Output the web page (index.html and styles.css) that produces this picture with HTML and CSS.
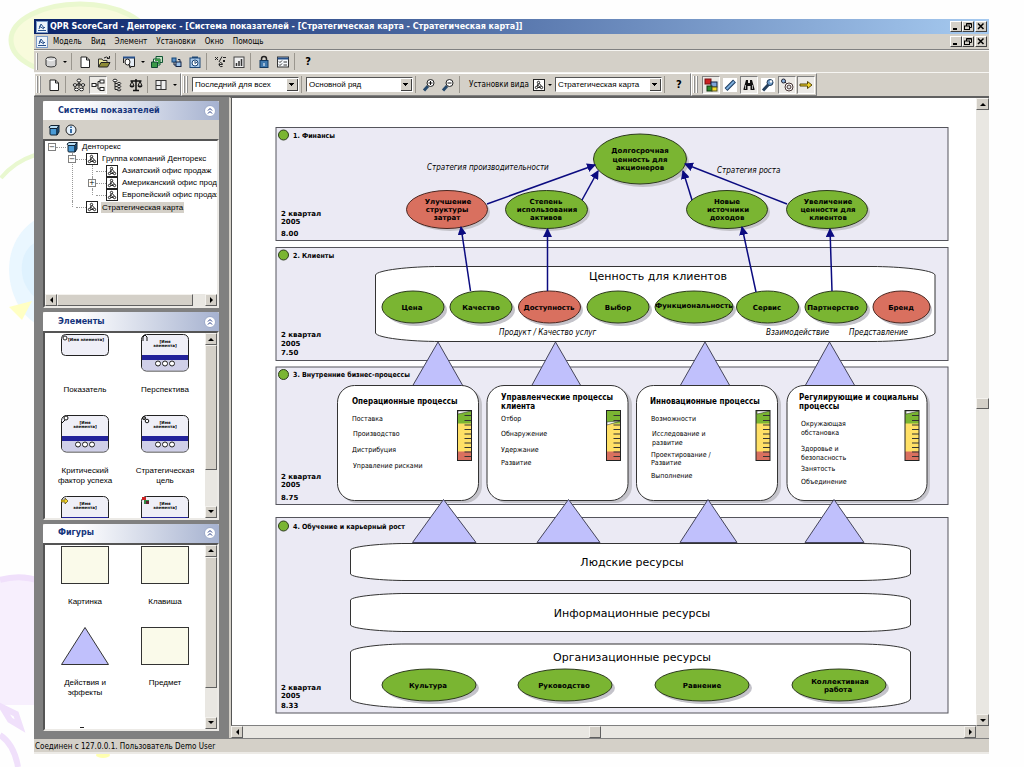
FILE: index.html
```html
<!DOCTYPE html>
<html lang="ru">
<head>
<meta charset="utf-8">
<title>QPR ScoreCard - Денторекс</title>
<link rel="stylesheet" href="styles.css">
</head>
<body>
<svg class="backdrop" width="240" height="767" viewBox="0 0 240 767" aria-hidden="true">
  <ellipse cx="80" cy="40" rx="69" ry="36" fill="#f8fbdc" stroke="#eaf8cf" stroke-width="5"/>
  <path d="M35 155Q14 162 1 178" fill="none" stroke="#e9f8d0" stroke-width="4"/>
  <path d="M40 217C12 232 4 262 12 290Q20 316 40 326z" fill="#eaf7ff"/>
  <path d="M40 240C24 246 18 264 24 282Q30 296 40 300z" fill="#dff2fe"/>
  <path d="M9 307L32 301L22 320z" fill="#ffffc4"/>
  <path d="M0 580Q20 574 40 581V705H0z" fill="#f7effd"/>
  <path d="M0 580Q20 574 40 581M2 707L10 720L20 726L16 714zM0 735Q14 744 18 767" fill="none" stroke="#f0e0fb" stroke-width="6"/>
  <ellipse cx="103" cy="755" rx="7" ry="3" fill="#ffffb0"/>
</svg>
<svg class="defs" width="0" height="0" aria-hidden="true">
  <defs>
    <symbol id="app" viewBox="0 0 12 12"><rect x=".5" y=".5" width="11" height="11" fill="#eef4fb" stroke="#7b9cc9"/><path d="M2 9.500H10M3 8L5 3L8 7L9 6M3 5L8 8" fill="none" stroke="#27508c"/></symbol>
    <symbol id="db" viewBox="0 0 14 14"><path d="M2 4Q2 2 7 2T12 4V10Q12 12 7 12T2 10z" fill="#d5d5d5" stroke="#333"/><path d="M2.500 4.500Q7 7 11.500 4.500" fill="none" stroke="#fff"/></symbol>
    <symbol id="page" viewBox="0 0 14 14"><path d="M3 2H8.500L11.500 5V12.500H3z" fill="#fff" stroke="#222"/><path d="M8.500 2V5H11.500" fill="none" stroke="#222"/></symbol>
    <symbol id="folder" viewBox="0 0 14 14"><path d="M1.500 12V4H5L6 5.500H10V7" fill="#e9e59b" stroke="#333"/><path d="M1.500 12L4 7.500H13L10.500 12z" fill="#8d8a35" stroke="#222"/><path d="M7 3Q9.500 1 11.500 3M12.500 1V3.500H10" fill="none" stroke="#222"/></symbol>
    <symbol id="find" viewBox="0 0 14 14"><path d="M1.500 3V8M3 2.500H12.500V11.500H9" fill="none" stroke="#222"/><path d="M1 2.500H13" stroke="#27508c" stroke-width="2"/><rect x="8" y="4" width="4" height="7" fill="#e6edf5"/><ellipse cx="5.500" cy="7" rx="2.500" ry="3" fill="#fff" stroke="#222"/><path d="M7 9.500L8.500 13" stroke="#222" stroke-width="1.500"/></symbol>
    <symbol id="cubes" viewBox="0 0 14 14"><path d="M6 1.500H12.500V7.500H6z" fill="#bfe0bf" stroke="#153"/><path d="M3.500 4H10V10H3.500z" fill="#fff" stroke="#153"/><path d="M1.500 7H7.500V12.500H1.500z" fill="#3a9a48" stroke="#143"/><path d="M5 5H9V9" fill="none" stroke="#3a9a48" stroke-width="2"/></symbol>
    <symbol id="link" viewBox="0 0 14 14"><rect x="3" y="3" width="4" height="4" fill="#5b8fc4" stroke="#147"/><rect x="7" y="7" width="5" height="4.500" fill="#9cc3ea" stroke="#124"/><path d="M5 7V10H7M9 4.500H11V7" fill="none" stroke="#124"/></symbol>
    <symbol id="clock" viewBox="0 0 14 14"><rect x="2" y="3" width="10" height="9.500" fill="#a9c9ea" stroke="#1d4674"/><path d="M4 1.500H10V3H4z" fill="#1d4674"/><circle cx="7" cy="8" r="3" fill="#fff" stroke="#1d4674"/><path d="M7 6V8.500L9 7" fill="none" stroke="#1d4674"/></symbol>
    <symbol id="calc" viewBox="0 0 14 14"><path d="M2 2L5 5M5 2L2 5M6 7L9 1.500M10 2.500H13M6 9.500H9.500Q9 7.500 7.500 7.500Q6 8 6 10Q7 12.500 9.500 11.500M10 5L12 7M12 5L10 7" fill="none" stroke="#222"/></symbol>
    <symbol id="chart" viewBox="0 0 14 14"><rect x="2" y="2" width="10" height="10.500" fill="#eee" stroke="#444"/><path d="M4.500 11V8M7 11V6M9.500 11V4" stroke="#333" stroke-width="1.500"/></symbol>
    <symbol id="lock" viewBox="0 0 14 14"><path d="M4.500 6V4Q4.500 1.500 7 1.500T9.500 4V6" fill="none" stroke="#222" stroke-width="1.500"/><rect x="3" y="5.500" width="8" height="7" fill="#3f78ad" stroke="#143a60"/><path d="M7 8V11" stroke="#fff"/></symbol>
    <symbol id="list" viewBox="0 0 14 14"><rect x="1.500" y="2" width="11" height="10" fill="#f6f9fc" stroke="#333"/><path d="M1.500 3.500H12.500" stroke="#26508a" stroke-width="2"/><path d="M3 6.500L4 7.500L6 5.500M3 9.500L4 10.500L6 8.500M7.500 7H11M7.500 10H11" fill="none" stroke="#333"/></symbol>
    <symbol id="orgs" viewBox="0 0 14 14"><path d="M7 4V10M3 7H11M7 5L3 8M7 5L11 8M3 8V11M11 8V11" stroke="#222" fill="none"/><g fill="#fff" stroke="#222"><ellipse cx="7" cy="2.500" rx="2" ry="1.500"/><ellipse cx="3" cy="7" rx="1.800" ry="1.300"/><ellipse cx="11" cy="7" rx="1.800" ry="1.300"/><ellipse cx="4.500" cy="11.500" rx="2" ry="1.300"/><ellipse cx="9.500" cy="11.500" rx="2" ry="1.300"/></g></symbol>
    <symbol id="flow" viewBox="0 0 14 14"><path d="M5 7H7M7 3.500V11M7 3.500H9M7 11H9" stroke="#222" fill="none"/><g fill="#fff" stroke="#222"><rect x="1" y="5.500" width="4" height="3"/><rect x="9" y="2" width="4" height="3"/><rect x="9" y="9.500" width="4" height="3"/></g></symbol>
    <symbol id="tree" viewBox="0 0 14 14"><path d="M5 3V11.500H8M5 5.500H8M5 8.500H8" stroke="#222" fill="none"/><g fill="#fff" stroke="#222"><ellipse cx="5" cy="2.500" rx="2" ry="1.300"/><ellipse cx="9" cy="5.500" rx="1.800" ry="1"/><ellipse cx="9" cy="8.500" rx="1.800" ry="1"/><ellipse cx="9" cy="11.800" rx="1.800" ry="1"/></g></symbol>
    <symbol id="scales" viewBox="0 0 14 14"><path d="M7 1V12M1.500 3H12.500M4 12.500H10" stroke="#111" stroke-width="1.500"/><path d="M3 3L1 8H5zM11 3L9 8H13z" fill="none" stroke="#111"/><path d="M.5 8H5.500Q3 11 .5 8zM8.500 8H13.500Q11 11 8.500 8z" fill="#111"/></symbol>
    <symbol id="grid" viewBox="0 0 14 14"><rect x="2" y="2.500" width="10" height="9" fill="#eee" stroke="#333"/><path d="M7 2.500V11.500M2 7.500H7" stroke="#333"/></symbol>
    <symbol id="zin" viewBox="0 0 14 14"><path d="M6 8L2 12.500" stroke="#26496b" stroke-width="3"/><circle cx="8.500" cy="5" r="3.500" fill="#fff" stroke="#222"/><path d="M6.500 5H10.500M8.500 3V7" stroke="#111"/></symbol>
    <symbol id="zout" viewBox="0 0 14 14"><path d="M6 8L2 12.500" stroke="#26496b" stroke-width="3"/><circle cx="8.500" cy="5" r="3.500" fill="#fff" stroke="#222"/><path d="M6.500 5H10.500" stroke="#111"/></symbol>
    <symbol id="map" viewBox="0 0 12 12"><rect x=".5" y=".5" width="11" height="11" fill="#fff" stroke="#222"/><path d="M6 4L3.500 8M6 4L9 8M4 8.500H8M4 5.500L8 9" stroke="#222" fill="none"/><g fill="#fff" stroke="#222"><circle cx="5.500" cy="3.500" r="1.200"/><circle cx="3.500" cy="8.500" r="1.200"/><circle cx="8.500" cy="8.500" r="1.200"/></g></symbol>
    <symbol id="blocks" viewBox="0 0 14 14"><rect x="1" y="1" width="6" height="5" fill="#c22" stroke="#711"/><rect x="7" y="4" width="6" height="5" fill="#7da3d8" stroke="#124"/><rect x="3" y="8" width="5" height="5" fill="#2c8b2c" stroke="#131"/><rect x="8" y="9" width="5" height="4" fill="#f3dc29" stroke="#552"/></symbol>
    <symbol id="pen" viewBox="0 0 14 14"><rect width="14" height="14" fill="#fff"/><path d="M3 11.500L11.500 3" stroke="#1c3d63" stroke-width="4"/><path d="M3.500 11L11 3.500" stroke="#7eaedb" stroke-width="2"/></symbol>
    <symbol id="bino" viewBox="0 0 14 14"><path d="M4 2H6V5H8V2H10L12.500 11V12H8.500V8H5.500V12H1.500V11z" fill="#111"/><path d="M3.500 7V11M10.500 7V11" stroke="#aaa"/></symbol>
    <symbol id="key" viewBox="0 0 14 14"><rect width="14" height="14" fill="#fff"/><path d="M2 12.500L8 6" stroke="#243f5c" stroke-width="3"/><circle cx="9" cy="4.500" r="3" fill="#6e9bc9" stroke="#1b3552"/><circle cx="10" cy="3.500" r="1.200" fill="#fff"/></symbol>
    <symbol id="gear" viewBox="0 0 14 14"><circle cx="3.500" cy="3" r="2" fill="#88b1dc" stroke="#223"/><path d="M5 4L8 7" stroke="#223"/><circle cx="9" cy="9" r="4" fill="#fff" stroke="#433"/><circle cx="9" cy="9" r="2" fill="#ddd" stroke="#433"/></symbol>
    <symbol id="arrow" viewBox="0 0 14 14"><path d="M1 6H8.500V3.500L13 7L8.500 10.500V8H1z" fill="#f4d629" stroke="#554608"/></symbol>
    <symbol id="cube" viewBox="0 0 12 12"><path d="M1 3L3 1.500H11L9 4.500H2z" fill="#b9dff5" stroke="#123"/><path d="M2 4.500H9V11H3Q2 11 2 10z" fill="#4b9bd6" stroke="#123"/><path d="M9 4.500L11 1.500V8L9 11z" fill="#1f5f94" stroke="#123"/></symbol>
    <symbol id="info" viewBox="0 0 12 12"><circle cx="6" cy="6" r="5" fill="#e6f1fb" stroke="#222"/><path d="M6 5V9M6 2.500V4" stroke="#26609c" stroke-width="1.800"/></symbol>
    <symbol id="up" viewBox="0 0 12 12"><circle cx="6" cy="6" r="5.500" fill="#fff" stroke="#9aa8c8"/><path d="M4 5.500L6 3.500L8 5.500M4 8.500L6 6.500L8 8.500" fill="none" stroke="#1f3580"/></symbol>
    <symbol id="min" viewBox="0 0 10 9"><path d="M2 7H6" stroke="#000" stroke-width="2"/></symbol>
    <symbol id="rest" viewBox="0 0 10 9"><path d="M3.500 4V1.500H8.500V5.500H7M3.500 2H8.500" fill="none" stroke="#000"/><rect x="1.500" y="4" width="5" height="3.500" fill="none" stroke="#000"/></symbol>
    <symbol id="x" viewBox="0 0 10 9"><path d="M2 1.500L7.500 7M7.500 1.500L2 7" stroke="#000" stroke-width="1.500"/></symbol>
    <symbol id="card" viewBox="0 0 48 38"><rect x=".5" y=".5" width="47" height="36.500" rx="5" fill="#efeff7" stroke="#222"/><path d="M1 25H47V32Q47 36.500 42 36.500H6Q1 36.500 1 32z" fill="#cfcfe8"/><path d="M1 23.500H47" stroke="#22229a" stroke-width="5"/><g fill="#fff" stroke="#222"><circle cx="17" cy="29.500" r="2.500"/><circle cx="24" cy="29.500" r="2.500"/><circle cx="31" cy="29.500" r="2.500"/></g></symbol>
    <marker id="head" viewBox="0 0 8 8" refX="7" refY="4" markerWidth="9" markerHeight="9" markerUnits="userSpaceOnUse" orient="auto"><path d="M0 0L8 4L0 8z" fill="#0b0b80"/></marker>
    <g id="gauge"><rect x="0" y="0" width="14" height="50" fill="#ffe066"/><rect x="0" y="0" width="14" height="13" fill="#7ab532"/><rect x="0" y="41" width="14" height="9" fill="#d9705f"/><path d="M7 5H14M7 10H14M7 14.500H14M7 19H14M7 23.500H14M7 28H14M7 32.500H14M7 37H14M7 41.500H14M7 46H14" stroke="#333"/><rect x="0" y="0" width="14" height="50" fill="none" stroke="#222"/></g>
  </defs>
</svg>

<div class="window">
  <header class="titlebar">
    <svg class="i12"><use href="#app"/></svg>
    <h1>QPR ScoreCard - Денторекс - [Система показателей - [Стратегическая карта - Стратегическая карта]]</h1>
    <div class="controls"><button aria-label="Свернуть"><svg><use href="#min"/></svg></button><button aria-label="Восстановить"><svg><use href="#rest"/></svg></button><button class="close" aria-label="Закрыть"><svg><use href="#x"/></svg></button></div>
  </header>
  <nav class="menubar">
    <svg class="i12"><use href="#app"/></svg>
    <button>Модель</button><button>Вид</button><button>Элемент</button><button>Установки</button><button>Окно</button><button>Помощь</button>
    <div class="controls"><button aria-label="Свернуть карту"><svg><use href="#min"/></svg></button><button aria-label="Восстановить карту"><svg><use href="#rest"/></svg></button><button class="close" aria-label="Закрыть карту"><svg><use href="#x"/></svg></button></div>
  </nav>
  <div class="toolbar first">
    <div class="group">
      <i class="grip"></i>
      <button class="tool" aria-label="База"><svg><use href="#db"/></svg></button><button class="drop" aria-label="Список баз"></button>
      <i class="sep"></i>
      <button class="tool" aria-label="Создать"><svg><use href="#page"/></svg></button><button class="tool" aria-label="Открыть"><svg><use href="#folder"/></svg></button>
      <i class="sep"></i>
      <button class="tool" aria-label="Просмотр"><svg><use href="#find"/></svg></button><button class="drop" aria-label="Виды просмотра"></button>
      <button class="tool" aria-label="Модели"><svg><use href="#cubes"/></svg></button><button class="tool" aria-label="Связи"><svg><use href="#link"/></svg></button><button class="tool" aria-label="Периоды"><svg><use href="#clock"/></svg></button>
      <i class="sep"></i>
      <button class="tool" aria-label="Формулы"><svg><use href="#calc"/></svg></button><button class="tool" aria-label="График"><svg><use href="#chart"/></svg></button>
      <i class="sep"></i>
      <button class="tool" aria-label="Права"><svg><use href="#lock"/></svg></button><button class="tool" aria-label="Список"><svg><use href="#list"/></svg></button>
      <i class="sep"></i>
      <button class="tool help">?</button>
    </div>
  </div>
  <div class="toolbar second">
    <div class="group boxed">
      <i class="grip"></i><i class="grip"></i>
      <button class="tool" aria-label="Новый"><svg><use href="#page"/></svg></button>
      <i class="sep"></i>
      <button class="tool" aria-label="Иерархия"><svg><use href="#orgs"/></svg></button><button class="tool on" aria-label="Карта"><svg><use href="#flow"/></svg></button><button class="tool" aria-label="Дерево"><svg><use href="#tree"/></svg></button><button class="tool" aria-label="Баланс"><svg><use href="#scales"/></svg></button>
      <i class="sep"></i>
      <button class="tool" aria-label="Макет"><svg><use href="#grid"/></svg></button><button class="drop" aria-label="Макеты"></button>
    </div>
    <div class="group boxed views">
      <i class="grip"></i><i class="grip"></i>
      <select aria-label="Период"><option>Последний для всех</option></select>
      <i class="sep"></i>
      <select aria-label="Ряд"><option>Основной ряд</option></select>
      <i class="sep"></i>
      <button class="tool" aria-label="Увеличить"><svg><use href="#zin"/></svg></button><button class="tool" aria-label="Уменьшить"><svg><use href="#zout"/></svg></button>
      <i class="sep"></i>
      <label for="view">Установки вида</label>
      <button class="tool small" aria-label="Вид карты"><svg><use href="#map"/></svg></button><button class="drop" aria-label="Виды карты"></button>
      <select id="view"><option>Стратегическая карта</option></select>
      <i class="sep"></i>
      <button class="tool help">?</button>
    </div>
    <div class="group boxed">
      <i class="grip"></i><i class="grip"></i>
      <button class="tool on" aria-label="Блоки"><svg><use href="#blocks"/></svg></button><button class="tool" aria-label="Показатели"><svg><use href="#pen"/></svg></button><button class="tool on" aria-label="Поиск"><svg><use href="#bino"/></svg></button><button class="tool" aria-label="Факторы"><svg><use href="#key"/></svg></button><button class="tool on" aria-label="Цели"><svg><use href="#gear"/></svg></button><button class="tool on" aria-label="Стрелка"><svg><use href="#arrow"/></svg></button>
    </div>
  </div>

  <div class="workspace">
    <aside class="dock">
      <section class="panel">
        <header><h2>Системы показателей</h2><button aria-label="Свернуть системы"><svg class="i12"><use href="#up"/></svg></button></header>
        <div class="panel-tools"><button aria-label="Система"><svg class="i12"><use href="#cube"/></svg></button><button aria-label="Сведения"><svg class="i12"><use href="#info"/></svg></button></div>
        <div class="frame column">
          <ul class="tree">
            <li><div class="row"><button class="toggle" aria-label="Свернуть">−</button><i class="stub"></i><svg><use href="#cube"/></svg><span>Денторекс</span></div>
              <ul>
                <li><div class="row"><button class="toggle" aria-label="Свернуть">−</button><i class="stub"></i><svg><use href="#map"/></svg><span>Группа компаний Денторекс</span></div>
                  <ul>
                    <li><div class="row"><i class="toggle none"></i><i class="stub"></i><svg><use href="#map"/></svg><span>Азиатский офис продаж</span></div></li>
                    <li><div class="row"><button class="toggle" aria-label="Развернуть">+</button><i class="stub"></i><svg><use href="#map"/></svg><span>Американский офис продаж</span></div></li>
                    <li><div class="row"><i class="toggle none"></i><i class="stub"></i><svg><use href="#map"/></svg><span>Европейский офис продаж</span></div></li>
                  </ul>
                </li>
                <li class="last"><div class="row"><i class="toggle none"></i><i class="stub"></i><svg><use href="#map"/></svg><span class="current">Стратегическая карта</span></div></li>
              </ul>
            </li>
          </ul>
          <div class="hscroll"><button class="l" aria-label="Влево"></button><div class="track"><i class="thumb tree-thumb"></i></div><button class="r" aria-label="Вправо"></button></div>
        </div>
      </section>

      <section class="panel">
        <header><h2>Элементы</h2><button aria-label="Свернуть элементы"><svg class="i12"><use href="#up"/></svg></button></header>
        <div class="frame">
          <div class="palette">
            <button><svg class="thumbnail"><rect x=".5" y=".5" width="47" height="21" rx="4" fill="#efeff7" stroke="#222"/><circle cx="4" cy="4" r="2" fill="#fff" stroke="#222"/><text class="micro" x="25" y="7">[Имя элемента]</text></svg><span>Показатель</span></button>
            <button><svg class="thumbnail"><use href="#card"/><path d="M2 7V3L4 1L6 3V7" fill="none" stroke="#111"/><text class="micro" x="24" y="9">[Имя</text><text class="micro" x="24" y="13">элемента]</text></svg><span>Перспектива</span></button>
            <button><svg class="thumbnail"><use href="#card"/><circle cx="5" cy="3" r="2" fill="#fff" stroke="#111"/><path d="M4 5L1 8" stroke="#111"/><text class="micro" x="24" y="9">[Имя</text><text class="micro" x="24" y="13">элемента]</text></svg><span>Критический фактор успеха</span></button>
            <button><svg class="thumbnail"><use href="#card"/><circle cx="3" cy="3" r="1.500" fill="#999" stroke="#111"/><circle cx="6" cy="6" r="1.800" fill="#fff" stroke="#111"/><text class="micro" x="24" y="9">[Имя</text><text class="micro" x="24" y="13">элемента]</text></svg><span>Стратегическая цель</span></button>
            <button aria-label="Инициатива"><svg class="thumbnail"><use href="#card"/><path d="M0 4H4V2L7 5L4 8V6H0z" fill="#f4d629" stroke="#554608" stroke-width=".7"/><text class="micro" x="24" y="9">[Имя</text><text class="micro" x="24" y="13">элемента]</text></svg></button>
            <button aria-label="Группа"><svg class="thumbnail"><use href="#card"/><rect x="1" y="1" width="4" height="3" fill="#c22"/><rect x="3" y="4" width="5" height="4" fill="#384"/><rect x="5" y="5" width="3" height="3" fill="#623"/><text class="micro" x="24" y="9">[Имя</text><text class="micro" x="24" y="13">элемента]</text></svg></button>
          </div>
          <div class="vscroll"><button class="u" aria-label="Вверх"></button><div class="track"><i class="thumb palette-thumb"></i></div><button class="d" aria-label="Вниз"></button></div>
        </div>
      </section>

      <section class="panel">
        <header><h2>Фигуры</h2><button aria-label="Свернуть фигуры"><svg class="i12"><use href="#up"/></svg></button></header>
        <div class="frame">
          <div class="palette">
            <button><svg class="thumbnail"><rect x=".5" y=".5" width="47" height="37" fill="#fafaea" stroke="#333"/></svg><span>Картинка</span></button>
            <button><svg class="thumbnail"><rect x=".5" y=".5" width="47" height="37" fill="#fafaea" stroke="#333"/></svg><span>Клавиша</span></button>
            <button><svg class="thumbnail"><path d="M24 .5L47.500 37.500H.5z" fill="#c0c0fc" stroke="#333"/></svg><span>Действия и эффекты</span></button>
            <button><svg class="thumbnail"><rect x=".5" y=".5" width="47" height="37" fill="#fafaea" stroke="#333"/></svg><span>Предмет</span></button>
            <button aria-label="Текст"><svg class="thumbnail"><path d="M19 19.500H23" stroke="#222"/></svg></button>
          </div>
          <div class="vscroll"><button class="u" aria-label="Вверх"></button><div class="track"><i class="thumb shapes-thumb"></i></div><button class="d" aria-label="Вниз"></button></div>
        </div>
      </section>
    </aside>

    <main class="view">
      <div class="canvas">
        <svg class="diagram" width="743" height="627" viewBox="232 98 743 627">
          <g class="zone"><rect x="276" y="127.500" width="672" height="113"/><rect x="276" y="247.500" width="672" height="113"/><rect x="276" y="367" width="672" height="137.500"/><rect x="276" y="517.500" width="672" height="195.500"/></g>
          <g class="good"><circle cx="283.500" cy="135" r="5"/><circle cx="283.500" cy="255" r="5"/><circle cx="283.500" cy="374.500" r="5"/><circle cx="283.500" cy="526" r="5"/></g>
          <g class="c7"><text x="293" y="138">1. Финансы</text><text x="293" y="258">2. Клиенты</text><text x="293" y="377">3. Внутренние бизнес-процессы</text><text x="293" y="529">4. Обучение и карьерный рост</text></g>
          <g class="b7"><text x="281" y="216">2 квартал</text><text x="281" y="224">2005</text><text x="281" y="236">8.00</text><text x="281" y="337">2 квартал</text><text x="281" y="346">2005</text><text x="281" y="355">7.50</text><text x="281" y="479">2 квартал</text><text x="281" y="487">2005</text><text x="281" y="500">8.75</text><text x="281" y="690">2 квартал</text><text x="281" y="698">2005</text><text x="281" y="708">8.33</text></g>

          <g class="sheet"><path d="M375.500 275C377 270 410 266.500 440 266.500H872C900 266.500 934 270 935 275V333C934 338 900 341.500 872 341.500H440C410 341.500 377 338 375.500 333z"/>
            <path d="M350.500 550C352 546 385 543.500 405 543.500H858C885 543.500 909 546 910.500 550V574C909 578 885 580.500 858 580.500H405C385 580.500 352 578 350.500 574z"/>
            <path d="M350.500 600C352 596 385 593.500 405 593.500H858C885 593.500 909 596 910.500 600V625C909 629 885 631.500 858 631.500H405C385 631.500 352 629 350.500 625z"/>
            <path d="M350.500 652C352 647 385 644 405 644H858C885 644 909 647 910.500 652V699C909 704 885 707.500 858 707.500H405C385 707.500 352 704 350.500 699z"/></g>
          <g class="h11"><text x="658" y="280">Ценность для клиентов</text><text x="632" y="566">Людские ресурсы</text><text x="632" y="617">Информационные ресурсы</text><text x="632" y="661">Организационные ресурсы</text></g>

          <g class="shadow"><ellipse cx="643" cy="162" rx="46" ry="25"/><ellipse cx="450" cy="212" rx="40" ry="19"/><ellipse cx="549" cy="212" rx="41" ry="19"/><ellipse cx="730" cy="212" rx="40" ry="19"/><ellipse cx="830" cy="212" rx="40" ry="19"/>
            <ellipse cx="416" cy="310" rx="31" ry="16"/><ellipse cx="484" cy="310" rx="31" ry="16"/><ellipse cx="552" cy="310" rx="31" ry="16"/><ellipse cx="621" cy="310" rx="31" ry="16"/><ellipse cx="697" cy="310" rx="39" ry="16"/><ellipse cx="770" cy="310" rx="31" ry="16"/><ellipse cx="839" cy="310" rx="31" ry="16"/><ellipse cx="904" cy="310" rx="28" ry="16"/>
            <ellipse cx="432" cy="688" rx="47" ry="16"/><ellipse cx="568" cy="688" rx="47" ry="16"/><ellipse cx="705" cy="688" rx="47" ry="16"/><ellipse cx="842" cy="688" rx="47" ry="16"/>
            <rect x="340" y="388" width="142" height="115" rx="17"/><rect x="490" y="388" width="142" height="115" rx="17"/><rect x="639" y="388" width="142" height="115" rx="17"/><rect x="790" y="388" width="140" height="115" rx="17"/></g>
          <g class="good"><ellipse cx="640" cy="159" rx="46.500" ry="25"/><ellipse cx="546.500" cy="209.500" rx="41" ry="19"/><ellipse cx="727" cy="209.500" rx="40.500" ry="19"/><ellipse cx="827" cy="209.500" rx="40.500" ry="19"/>
            <ellipse cx="413" cy="307" rx="31" ry="16"/><ellipse cx="481" cy="307" rx="31" ry="16"/><ellipse cx="618" cy="307" rx="31" ry="16"/><ellipse cx="694" cy="307" rx="39" ry="16"/><ellipse cx="767.500" cy="307" rx="31" ry="16"/><ellipse cx="836" cy="307" rx="31" ry="16"/>
            <ellipse cx="429" cy="685" rx="47" ry="16"/><ellipse cx="565" cy="685" rx="47" ry="16"/><ellipse cx="702" cy="685" rx="47" ry="16"/><ellipse cx="839" cy="685" rx="47" ry="16"/></g>
          <g class="bad"><ellipse cx="447" cy="209.500" rx="40.500" ry="19"/><ellipse cx="549.500" cy="307" rx="31" ry="16"/><ellipse cx="901.500" cy="307" rx="28.500" ry="16"/></g>
          <g class="arrows"><path d="M487 204L595 165"/><path d="M582 200L598 171"/><path d="M470.500 291L461 227"/><path d="M547.500 291V229"/><path d="M692 200L683 171"/><path d="M787 204L685 164"/><path d="M756 292L742 227"/><path d="M832 291L830 229"/></g>
          <g class="b7 mid"><text x="640" y="153">Долгосрочная</text><text x="640" y="162">ценность для</text><text x="640" y="170">акционеров</text>
            <text x="448" y="204">Улучшение</text><text x="447" y="212">структуры</text><text x="447" y="220">затрат</text>
            <text x="546" y="204">Степень</text><text x="547" y="212">использования</text><text x="546" y="220">активов</text>
            <text x="727" y="204">Новые</text><text x="728" y="212">источники</text><text x="727" y="220">доходов</text>
            <text x="828" y="204">Увеличение</text><text x="828" y="212">ценности для</text><text x="828" y="220">клиентов</text>
            <text x="412" y="310">Цена</text><text x="481" y="310">Качество</text><text x="549" y="310">Доступность</text><text x="618" y="310">Выбор</text><text x="694" y="308">Функциональность</text><text x="767" y="310">Сервис</text><text x="833" y="310">Партнерство</text><text x="901" y="310">Бренд</text>
            <text x="428" y="688">Культура</text><text x="564" y="688">Руководство</text><text x="702" y="688">Равнение</text><text x="840" y="684">Коллективная</text><text x="838" y="692">работа</text></g>
          <g class="it"><text x="427" y="170">Стратегия производительности</text><text x="717" y="173">Стратегия роста</text><text x="499" y="335">Продукт / Качество услуг</text><text x="766" y="335">Взаимодействие</text><text x="849" y="335">Представление</text></g>
          <g class="tri"><path d="M438 342L463 386H412.500z"/><path d="M555.500 342L581 386H531.500z"/><path d="M705 342L730 386H680z"/><path d="M829.500 342L855 386H805z"/></g>
          <g class="sheet"><rect x="337.500" y="385.500" width="141" height="115" rx="17"/><rect x="487" y="385.500" width="141" height="115" rx="17"/><rect x="636.500" y="385.500" width="141" height="115" rx="17"/><rect x="787" y="385.500" width="140" height="115" rx="17"/></g>
          <g class="tri"><path d="M443.500 499.500L476 542.500H412.500z"/><path d="M568.500 499.500L600 542.500H537z"/><path d="M708 499.500L737 542.500H680z"/><path d="M834 499.500L864 542.500H805z"/></g>
          <use href="#gauge" x="457.500" y="410.500"/><use href="#gauge" x="606.500" y="410.500"/><use href="#gauge" x="756" y="410.500"/><use href="#gauge" x="905" y="410.500"/>
          <g class="needle"><path d="M458 411H471L458 414z"/><path d="M607 422L620 421L607 425z"/><path d="M757 411H770L757 414z"/><path d="M906 411H919L906 414z"/></g>
          <g class="b8"><text x="352" y="404">Операционные процессы</text><text x="501" y="400">Управленческие процессы</text><text x="501" y="409">клиента</text><text x="650" y="404">Инновационные процессы</text><text x="799" y="400">Регулирующие и социальны</text><text x="799" y="409">процессы</text></g>
          <g class="r7"><text x="352" y="421">Поставка</text><text x="353" y="436">Производство</text><text x="352" y="452">Дистрибуция</text><text x="353" y="468">Управление рисками</text>
            <text x="501" y="421">Отбор</text><text x="501" y="436">Обнаружение</text><text x="501" y="452">Удержание</text><text x="501" y="465">Развитие</text>
            <text x="651" y="421">Возможности</text><text x="652" y="436">Исследование и</text><text x="652" y="445">развитие</text><text x="651" y="457">Проектирование /</text><text x="651" y="465">Развитие</text><text x="651" y="478">Выполнение</text>
            <text x="801" y="426">Окружающая</text><text x="801" y="435">обстановка</text><text x="801" y="451">Здоровье и</text><text x="801" y="460">безопасность</text><text x="801" y="471">Занятость</text><text x="801" y="484">Объединение</text></g>
        </svg>
      </div>
      <div class="vscroll"><button class="u" aria-label="Вверх"></button><div class="track"><i class="thumb page-v"></i></div><button class="d" aria-label="Вниз"></button></div>
      <div class="hscroll"><button class="l" aria-label="Влево"></button><div class="track"><i class="thumb page-h"></i></div><button class="r" aria-label="Вправо"></button></div>
      <i class="corner"></i>
    </main>
  </div>
  <footer class="status">Соединен с 127.0.0.1. Пользователь Demo User</footer>
</div>
</body>
</html>
```
FILE: styles.css
```css
* { box-sizing: border-box; }
body {
  margin: 0;
  min-height: 100vh;
  display: flex;
  padding: 19px 35px 13px 34px;
  background: #fefefe;
  font: 8px/10px "DejaVu Sans Condensed", "DejaVu Sans", sans-serif;
  color: #000;
}
.backdrop { position: absolute; left: 0; top: 0; }
.defs { position: absolute; }
button { font: inherit; color: inherit; border: 0; padding: 0; margin: 0; background: none; }
h1, h2 { margin: 0; font: bold 8px/10px "DejaVu Sans", sans-serif; }
ul { list-style: none; margin: 0; padding: 0; }
i { display: block; }
svg { display: block; flex: none; }
.i12 { width: 12px; height: 12px; }

.window { position: relative; flex: 1; min-width: 0; display: flex; flex-direction: column; background: #d4d0c8; }

.titlebar, .menubar { display: flex; align-items: center; padding: 0 2px; }
.titlebar { height: 15px; gap: 2px; color: #fff; background: linear-gradient(90deg, #0b246a, #a6caf0); }
.titlebar h1 { white-space: nowrap; }
.menubar { height: 16px; border-bottom: 1px solid #808080; }
.menubar > button { margin-left: 5px; margin-right: 4px; }
.controls { display: flex; margin-left: auto; }
.controls button { width: 12px; height: 11px; background: #d4d0c8; border: 1px solid; border-color: #fff #404040 #404040 #fff; }
.controls .close { margin-left: 1px; }
.controls svg { width: 10px; height: 9px; }

.toolbar { display: flex; border-top: 1px solid #f6f5f2; }
.first { height: 22px; }
.second { height: 25px; border-bottom: 1px solid #606060; }
.group { display: flex; align-items: center; gap: 1px; padding: 0 2px; }
.boxed { border: 1px solid; border-color: #fff #808080 #808080 #fff; padding: 0 1px; }
.grip { width: 2px; height: 17px; border-left: 1px solid #fff; border-right: 1px solid #909090; }
.grip + .tool, .grip + select { margin-left: 3px; }
.sep { width: 5px; height: 17px; border-left: 1px solid #9a968e; margin: 0 -1px 0 1px; }
.tool { width: 18px; height: 18px; display: grid; place-items: center; }
.tool svg { width: 14px; height: 14px; }
.tool.on { background: #eceae6; border: 1px solid; border-color: #808080 #fff #fff #808080; }
.tool.small { width: 12px; }
.tool.small svg { width: 12px; height: 12px; }
.help { font-weight: bold; font-size: 11px; }
.views .help { width: 20px; }
.drop { width: 8px; height: 18px; display: grid; place-items: center; }
.drop::before { content: ""; border: 2px solid transparent; border-top-color: #000; border-bottom: 0; }
select {
  appearance: none;
  width: 107px;
  height: 15px;
  padding: 0 12px 0 2px;
  border: 1px solid;
  border-color: #555 #fff #fff #555;
  border-radius: 0;
  color: #000;
  font: 8px/12px "Liberation Sans", sans-serif;
  background:
    linear-gradient(#000, #000) right 4px top 5px / 5px 1px no-repeat,
    linear-gradient(#000, #000) right 5px top 6px / 3px 1px no-repeat,
    linear-gradient(#000, #000) right 6px top 7px / 1px 1px no-repeat,
    linear-gradient(#d4d0c8, #d4d0c8) right 1px top 1px / 10px 11px no-repeat,
    linear-gradient(#404040, #404040) right 0 top 1px / 11px 12px no-repeat,
    #fff;
}
.views label { padding: 0 3px 0 5px; white-space: nowrap; }

.workspace { flex: 1; display: flex; min-height: 641px; }
.dock { width: 195px; flex: none; display: flex; flex-direction: column; gap: 4px; padding: 4px 10px 7px 9px; background: #808080; }
.panel { flex: 1 1 0; min-height: 0; display: flex; flex-direction: column; background: #d4d0c8; }
.panel > header {
  height: 19px; flex: none;
  display: flex; align-items: center; justify-content: space-between;
  padding: 0 3px 0 15px;
  color: #16357c;
  border-radius: 2px 2px 0 0;
  background: linear-gradient(90deg, #fff 20%, #a6b2d0);
}
.panel-tools { display: flex; gap: 5px; padding: 3px 5px; height: 19px; flex: none; }
.frame { flex: 1; min-height: 0; display: flex; background: #fff; border: 2px solid; border-color: #555 #eceae6 #eceae6 #555; overflow: hidden; }
.column { flex-direction: column; }

.tree { flex: 1; font: 8px/12px "Liberation Sans", sans-serif; padding: 0 0 0 3px; overflow: hidden; }
.tree ul { margin-left: 20px; }
.tree li { position: relative; }
.tree ul > li::before { content: ""; position: absolute; left: 4px; top: 0; bottom: 0; border-left: 1px dotted #999; }
.tree ul > li:last-child::before { bottom: auto; height: 6px; }
.row { position: relative; display: flex; align-items: center; height: 12px; white-space: nowrap; }
.row svg { width: 12px; height: 12px; margin-right: 3px; }
.row span { padding: 0 1px; }
.toggle { width: 8px; height: 8px; flex: none; display: grid; place-items: center; border: 1px solid #808080; background: #fff; font: 7px/6px "DejaVu Sans", sans-serif; }
.toggle.none { border: 0; background: none; width: 4px; margin-right: 4px; }
.stub { width: 10px; flex: none; border-top: 1px dotted #999; }
.current { background: #d4d0c8; line-height: 11px; }

.palette { flex: 1; display: grid; grid-template-columns: 1fr 1fr; grid-auto-rows: 81px; padding-top: 1px; overflow: hidden; font-family: "Liberation Sans", sans-serif; }
.palette button { display: flex; flex-direction: column; align-items: center; }
.palette span { max-width: 66px; }
.thumbnail { width: 48px; height: 38px; margin-bottom: 13px; }
.micro { font: bold 4px "DejaVu Sans", sans-serif; text-anchor: middle; }

.vscroll, .hscroll { display: flex; background: #e9e7e2; flex: none; }
.vscroll { width: 12px; flex-direction: column; }
.hscroll { height: 12px; }
.track { flex: 1; display: flex; }
.vscroll .track { flex-direction: column; }
.thumb, .vscroll button, .hscroll button { background: #d4d0c8; border: 1px solid; border-color: #f4f2ee #606060 #606060 #f4f2ee; }
.vscroll button, .hscroll button { width: 12px; height: 12px; display: grid; place-items: center; flex: none; }
.vscroll button::before, .hscroll button::before { content: ""; border: 3px solid transparent; }
.vscroll .u::before { border-bottom-color: #000; border-top: 0; }
.vscroll .d::before { border-top-color: #000; border-bottom: 0; }
.hscroll .l::before { border-right-color: #000; border-left: 0; }
.hscroll .r::before { border-left-color: #000; border-right: 0; }
.tree-thumb { width: 92%; }
.palette-thumb { height: 78%; }
.shapes-thumb { height: 82%; }
.page-v { height: 11px; margin-top: 288px; }
.page-h { width: 12px; margin-left: 346px; }

.view { flex: 1; min-width: 0; display: grid; grid-template: minmax(0, 1fr) 12px / minmax(0, 1fr) 13px; border-left: 2px solid #d4d0c8; border-top: 1px solid #606060; background: #d4d0c8; }
.view .vscroll { width: 13px; }
.view .vscroll button { width: 13px; }
.canvas { background: #fff; overflow: hidden; border-left: 1px solid #555; border-bottom: 1px solid #808080; }

.zone { fill: #ebeaf4; stroke: #55555c; }
.good { fill: #7ab532; stroke: #2c3a1c; }
.bad { fill: #d9705f; stroke: #4a2620; }
.sheet { fill: #fff; stroke: #333; }
.tri { fill: #c0c0fc; stroke: #44445a; }
.shadow { fill: #c4c3ca; }
.arrows { fill: none; stroke: #0b0b80; stroke-width: 1.5; }
.arrows path { marker-end: url(#head); }
.needle { fill: #fff; stroke: #222; stroke-width: 0.5; }
.b7 { font: bold 7px "DejaVu Sans", sans-serif; }
.c7 { font: bold 7px "DejaVu Sans Condensed", "DejaVu Sans", sans-serif; }
.b8 { font: bold 8px "DejaVu Sans Condensed", "DejaVu Sans", sans-serif; }
.r7 { font: 7px "DejaVu Sans Condensed", "DejaVu Sans", sans-serif; }
.it { font: italic 8px "DejaVu Sans Condensed", "DejaVu Sans", sans-serif; }
.h11 { font: 11px "DejaVu Sans", sans-serif; text-anchor: middle; }
.mid { text-anchor: middle; }

.status { height: 16px; flex: none; padding: 2px 1px; line-height: 12px; border-top: 1px solid #808080; border-bottom: 2px solid #eceae6; }
```
